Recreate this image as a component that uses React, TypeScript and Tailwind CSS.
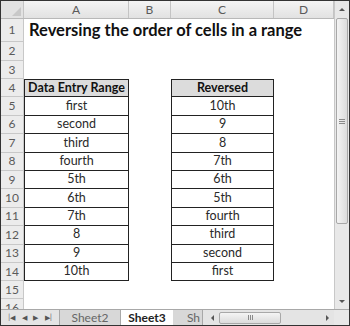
import React from "react";

const font = { fontFamily: "Lato, 'Open Sans', Arial, sans-serif" };

const left = ["first", "second", "third", "fourth", "5th", "6th", "7th", "8", "9", "10th"];
const right = [...left].reverse();

function RowHead({ n, h }: { n: number; h: string }) {
  return (
    <div
      className={`flex w-[23px] shrink-0 items-center justify-center border-b border-r border-[#c8c8c8] bg-[#ececec] text-[12px] text-[#5a5a5a] ${h}`}
    >
      {n}
    </div>
  );
}

function ColHead({ label, w }: { label: string; w: string }) {
  return (
    <div
      className={`flex h-full shrink-0 items-center justify-center border-r border-[#c4c4c4] bg-gradient-to-b from-[#f4f4f4] to-[#e2e2e2] text-[12px] text-[#5a5a5a] ${w}`}
    >
      {label}
    </div>
  );
}

function Box({ title, items }: { title: string; items: string[] }) {
  return (
    <div className="flex flex-col border-x border-[#222]">
      <div className="flex h-[18.4px] items-center justify-center border-y border-[#222] bg-[#dcdcdc] text-[12.5px] font-bold text-[#111]">
        {title}
      </div>
      {items.map((t) => (
        <div
          key={t}
          className="flex h-[18.4px] items-center justify-center border-b border-[#222] text-[12.5px] text-[#2a2a2a]"
        >
          {t}
        </div>
      ))}
    </div>
  );
}

export default function App() {
  return (
    <div
      className="flex h-[326px] w-[350px] flex-col overflow-hidden border border-[#333] bg-white"
      style={font}
    >
      <div className="flex min-h-0 flex-1">
        {/* sheet */}
        <div className="relative flex min-w-0 flex-1 flex-col overflow-hidden">
          <div className="flex h-[18px] shrink-0 border-b border-[#b8b8b8]">
            <div className="relative h-full w-[23px] shrink-0 border-r border-[#c4c4c4] bg-[#e2e2e2]">
              <div className="absolute bottom-[2px] right-[2px] h-0 w-0 border-b-[9px] border-l-[9px] border-b-[#c8c8c8] border-l-transparent" />
            </div>
            <ColHead label="A" w="w-[105px]" />
            <ColHead label="B" w="w-[42px]" />
            <ColHead label="C" w="w-[103px]" />
            <ColHead label="D" w="w-[60px]" />
          </div>

          <div className="flex flex-1">
            <div className="flex flex-col">
              <RowHead n={1} h="h-[23px]" />
              <RowHead n={2} h="h-[19px]" />
              <RowHead n={3} h="h-[18px]" />
              {Array.from({ length: 11 }, (_, i) => (
                <RowHead key={i} n={i + 4} h="h-[18.4px]" />
              ))}
              <RowHead n={15} h="h-[18px]" />
              <RowHead n={16} h="h-[18px]" />
            </div>

            <div className="flex flex-1 flex-col">
              <div className="flex h-[23px] items-center whitespace-nowrap pl-[5px] text-[16.5px] font-bold text-[#111]">
                Reversing the order of cells in a range
              </div>
              <div className="h-[37px]" />
              <div className="flex">
                <div className="w-[105px]">
                  <Box title="Data Entry Range" items={left} />
                </div>
                <div className="w-[42px]" />
                <div className="w-[103px]">
                  <Box title="Reversed" items={right} />
                </div>
              </div>
            </div>
          </div>
        </div>

        {/* vertical scrollbar */}
        <div className="flex w-[15px] shrink-0 flex-col border-l border-[#c8c8c8] bg-[#e8e8e8]">
          <div className="flex h-[17px] items-center justify-center">
            <div className="h-0 w-0 border-x-[3px] border-b-[3px] border-x-transparent border-b-[#555]" />
          </div>
          <div className="mx-[1px] flex h-[206px] flex-col items-center justify-center rounded-[2px] border border-[#a8a8a8] bg-gradient-to-r from-[#f4f4f4] to-[#dcdcdc]">
            <div className="flex flex-col gap-[1px]">
              <div className="h-px w-[6px] bg-[#8a8a8a]" />
              <div className="h-px w-[6px] bg-[#8a8a8a]" />
              <div className="h-px w-[6px] bg-[#8a8a8a]" />
            </div>
          </div>
          <div className="flex-1" />
          <div className="flex h-[16px] items-center justify-center">
            <div className="h-0 w-0 border-x-[3px] border-t-[3px] border-x-transparent border-t-[#555]" />
          </div>
        </div>
      </div>

      {/* tab bar */}
      <div className="flex h-[16px] shrink-0 items-stretch border-t border-[#a8a8a8] bg-[#e4e4e4] text-[12px]">
        <div className="flex w-[58px] items-center justify-around px-[4px] text-[7px] text-[#555]">
          <span>|◀</span>
          <span>◀</span>
          <span>▶</span>
          <span>▶|</span>
        </div>
        <div className="flex w-[62px] items-center justify-center border-l border-r border-[#a8a8a8] bg-[#d8d8d8] text-[#666]">
          Sheet2
        </div>
        <div className="flex w-[52px] items-center justify-center bg-white font-bold text-[#222]">
          Sheet3
        </div>
        <div className="flex w-[30px] items-center justify-end border-r border-[#a8a8a8] bg-[#d8d8d8] pr-[2px] text-[#666]">
          Sh
        </div>
        <div className="ml-[2px] flex flex-1 items-center">
          <div className="flex h-full w-[14px] items-center justify-center">
            <div className="h-0 w-0 border-y-[3px] border-r-[3px] border-y-transparent border-r-[#555]" />
          </div>
          <div className="flex h-[12px] w-[62px] items-center justify-center rounded-[2px] border border-[#a8a8a8] bg-gradient-to-b from-[#f4f4f4] to-[#dcdcdc]">
            <div className="flex gap-[1px]">
              <div className="h-[5px] w-px bg-[#8a8a8a]" />
              <div className="h-[5px] w-px bg-[#8a8a8a]" />
              <div className="h-[5px] w-px bg-[#8a8a8a]" />
            </div>
          </div>
          <div className="flex-1" />
          <div className="flex h-full w-[14px] items-center justify-center">
            <div className="h-0 w-0 border-y-[3px] border-l-[3px] border-y-transparent border-l-[#555]" />
          </div>
        </div>
        <div className="w-[15px] bg-[#e8e8e8]" />
      </div>
    </div>
  );
}
